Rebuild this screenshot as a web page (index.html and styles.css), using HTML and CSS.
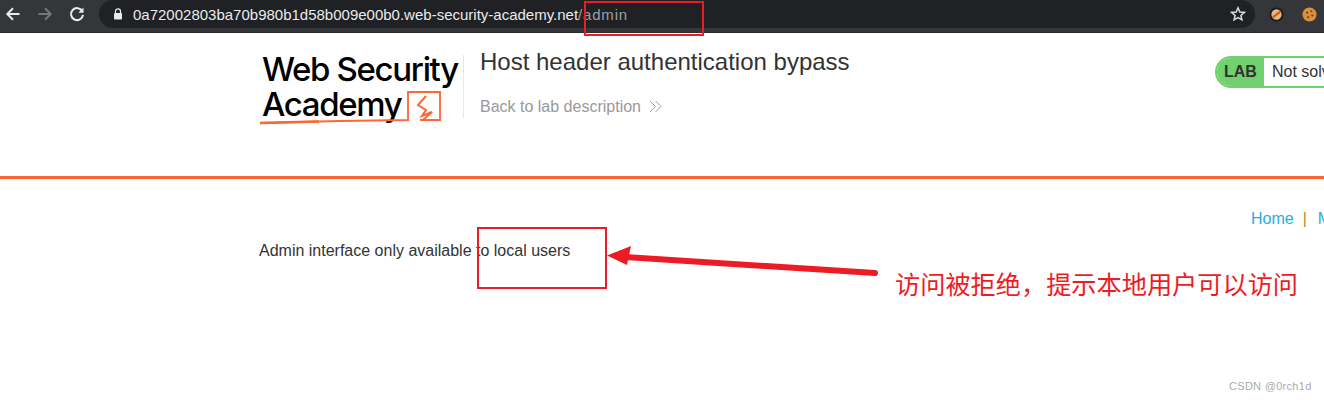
FILE: index.html
```html
<!DOCTYPE html>
<html lang="zh-CN">
<head>
    <meta charset="UTF-8">
    <title>Host header authentication bypass</title>
    <link rel="stylesheet" href="styles.css">
</head>
<body>
    <div class="browser-bar">
        <svg class="nav-icon" viewBox="0 0 16 16"><path d="M14.5 8H2.5M8 2.3 2.3 8 8 13.7" fill="none" stroke="#e8eaed" stroke-width="2"/></svg>
        <svg class="nav-icon" viewBox="0 0 16 16"><path d="M1.5 8h12M8 2.3 13.700 8 8 13.700" fill="none" stroke="#75777a" stroke-width="2"/></svg>
        <svg class="nav-icon" viewBox="0 0 16 16"><path d="M13.300 5.200A6 6 0 1 0 14 8.800" fill="none" stroke="#e8eaed" stroke-width="2"/><path d="M14.500 1.500v5.200H9.300z" fill="#e8eaed"/></svg>
        <div class="url-pill">
            <svg class="lock" viewBox="0 0 10 12"><path d="M2.500 5V3.300a2.500 2.500 0 0 1 5 0V5" fill="none" stroke="#e8eaed" stroke-width="1.200"/><rect x="1" y="5" width="8" height="6.500" rx="1" fill="#e8eaed"/></svg>
            <span class="url-text">0a72002803ba70b980b1d58b009e00b0.web-security-academy.net<span class="url-path">/admin</span></span>
            <svg class="star" viewBox="0 0 16 16"><path d="M8 1.800 9.800 6l4.500.4-3.400 3 1 4.400L8 11.500l-3.900 2.300 1-4.400-3.400-3L6.200 6z" fill="none" stroke="#dadce0" stroke-width="1.500"/></svg>
        </div>
        <svg class="ext-icon ext-first" viewBox="0 0 16 16"><circle cx="8" cy="8" r="6.500" fill="#e6b88a" stroke="#1a1a1a" stroke-width="2"/><path d="M4 11 12 5" stroke="#c8641e" stroke-width="2.500"/></svg>
        <svg class="ext-icon ext-second" viewBox="0 0 16 16"><circle cx="8" cy="8" r="7.500" fill="#d9903c"/><circle cx="5.500" cy="6" r="1.100" fill="#6b3d16"/><circle cx="10" cy="4.500" r="1" fill="#6b3d16"/><circle cx="11" cy="9" r="1.100" fill="#6b3d16"/><circle cx="6.500" cy="11" r="1.100" fill="#6b3d16"/></svg>
    </div>

    <header class="lab-header">
        <div class="logo">
            <div class="logo-line">Web Security</div>
            <div class="logo-line">Academy</div>
            <svg class="logo-mark" viewBox="0 0 186 36"><path d="M1 33 80 31 149 30V2H181V30H161" fill="none" stroke="#ff6633" stroke-width="1.800"/><path d="M1 33 60 31.500" fill="none" stroke="#ff6633" stroke-width="2.500"/><path d="M167 6 159 15 167 20 163 26 173 22 164 30" fill="none" stroke="#ff6633" stroke-width="2"/></svg>
        </div>
        <div class="lab-title">
            <h2>Host header authentication bypass</h2>
            <a class="back-link" href="#">Back to lab description <svg class="chevrons" viewBox="0 0 13 13"><path d="M1 1l5.500 5.500L1 12M6.500 1 12 6.500 6.500 12" fill="none" stroke="#999" stroke-width="1"/></svg></a>
        </div>
        <div class="lab-status">
            <span class="lab-label">LAB</span>
            <span class="lab-state">Not solved</span>
        </div>
    </header>

    <main class="content">
        <nav class="top-links">
            <a href="#">Home</a><span class="sep">|</span><a href="#">My account</a>
        </nav>
        <p class="message">Admin interface only available to local users</p>
    </main>

    <div class="mark mark-url"></div>
    <div class="mark mark-text"></div>
    <svg class="arrow" viewBox="0 0 280 40"><path d="M268 27 18 11" stroke="#ed1c24" stroke-width="6" stroke-linecap="round"/><path d="M0 9.500 24 0 20 19z" fill="#ed1c24"/></svg>
    <div class="note">访问被拒绝，提示本地用户可以访问</div>
    <div class="watermark">CSDN @0rch1d</div>
</body>
</html>
```

FILE: styles.css
```css
html, body {
    margin: 0;
    padding: 0;
    height: 400px;
    overflow: hidden;
    background-color: #fff;
    font-family: "Liberation Sans", Arial, sans-serif;
    color: #333;
}
a {
    text-decoration: none;
}

/* browser chrome */
.browser-bar {
    display: flex;
    align-items: center;
    height: 33px;
    padding: 0 0 4px 5px;
    box-sizing: border-box;
    background-color: #35363a;
    border-bottom: 1px solid #2b2c2f;
}
.nav-icon {
    flex-shrink: 0;
    width: 16px;
    height: 16px;
    margin-right: 16px;
}
.url-pill {
    display: flex;
    flex-shrink: 0;
    align-items: center;
    width: 1156px;
    height: 28px;
    margin-left: -2px;
    padding: 0 9px 0 14px;
    box-sizing: border-box;
    background-color: #202124;
    border-radius: 14px;
}
.lock {
    width: 10px;
    height: 12px;
    margin-right: 10px;
}
.url-text {
    flex: 1;
    font-size: 15px;
    color: #e8eaed;
}
.url-path {
    letter-spacing: 0.8px;
    color: #9aa0a6;
}
.star {
    width: 16px;
    height: 16px;
}
.ext-icon {
    flex-shrink: 0;
    width: 15px;
    height: 15px;
}
.ext-first {
    margin-left: 14px;
}
.ext-second {
    margin-left: 18px;
}

/* lab header */
.lab-header {
    display: flex;
    height: 146px;
    padding-left: 259px;
    box-sizing: border-box;
    border-bottom: 3px solid #ff6633;
    overflow: hidden;
}
.logo {
    position: relative;
    flex-shrink: 0;
    width: 205px;
    height: 63px;
    margin-top: 22px;
    padding-left: 3px;
    box-sizing: border-box;
    border-right: 1px solid #e6e6e6;
    font-family: Inter, sans-serif;
    font-size: 33px;
    font-weight: 500;
    line-height: 35px;
    letter-spacing: -1.35px;
    color: #000;
    white-space: nowrap;
}
.logo-line:first-child {
    margin-top: -3px;
}
.logo-mark {
    position: absolute;
    left: 0;
    top: 35px;
    width: 186px;
    height: 36px;
}
.lab-title {
    flex-shrink: 0;
    width: 735px;
    padding-left: 16px;
    box-sizing: border-box;
}
h2 {
    margin: 14px 0 0;
    font-size: 24px;
    line-height: 30px;
    font-weight: normal;
}
.back-link {
    display: block;
    margin-top: 20px;
    font-size: 16px;
    line-height: 20px;
    color: #999;
}
.chevrons {
    width: 13px;
    height: 13px;
    margin-left: 4px;
    vertical-align: -1px;
}
.lab-status {
    display: flex;
    flex-shrink: 0;
    align-self: flex-start;
    width: 140px;
    height: 32px;
    margin: 23px 0 0 16px;
    box-sizing: border-box;
    border: 2px solid #70d16d;
    border-radius: 16px 0 0 16px;
    line-height: 28px;
    font-size: 16px;
    white-space: nowrap;
}
.lab-label {
    width: 47px;
    padding-left: 7px;
    box-sizing: border-box;
    background-color: #70d16d;
    border-radius: 14px 0 0 14px;
    font-weight: bold;
}
.lab-state {
    padding-left: 8px;
}

/* page body */
.content {
    padding: 30px 0 0 259px;
    overflow: hidden;
}
.top-links {
    margin-left: 992px;
    font-size: 16px;
    line-height: 20px;
    white-space: nowrap;
}
.top-links a {
    color: #29abe2;
}
.sep {
    margin: 0 11px 0 9px;
    color: #c87f1e;
}
.message {
    margin: 12px 0 0;
    font-size: 16px;
    line-height: 20px;
}

/* screenshot annotations */
.mark {
    position: absolute;
    box-sizing: border-box;
    border: 2px solid #ed1c24;
}
.mark-url {
    left: 584px;
    top: 1px;
    width: 120px;
    height: 35px;
}
.mark-text {
    left: 477px;
    top: 227px;
    width: 130px;
    height: 62px;
}
.arrow {
    position: absolute;
    left: 607px;
    top: 246px;
    width: 280px;
    height: 40px;
}
.note {
    position: absolute;
    left: 895px;
    top: 268px;
    font-family: "Noto Sans CJK SC", sans-serif;
    font-size: 25.2px;
    line-height: 30px;
    color: #ed1c24;
    white-space: nowrap;
}
.watermark {
    position: absolute;
    left: 1229px;
    top: 379px;
    font-size: 11px;
    line-height: 14px;
    letter-spacing: 0.3px;
    color: #aaa;
    white-space: nowrap;
}
```
